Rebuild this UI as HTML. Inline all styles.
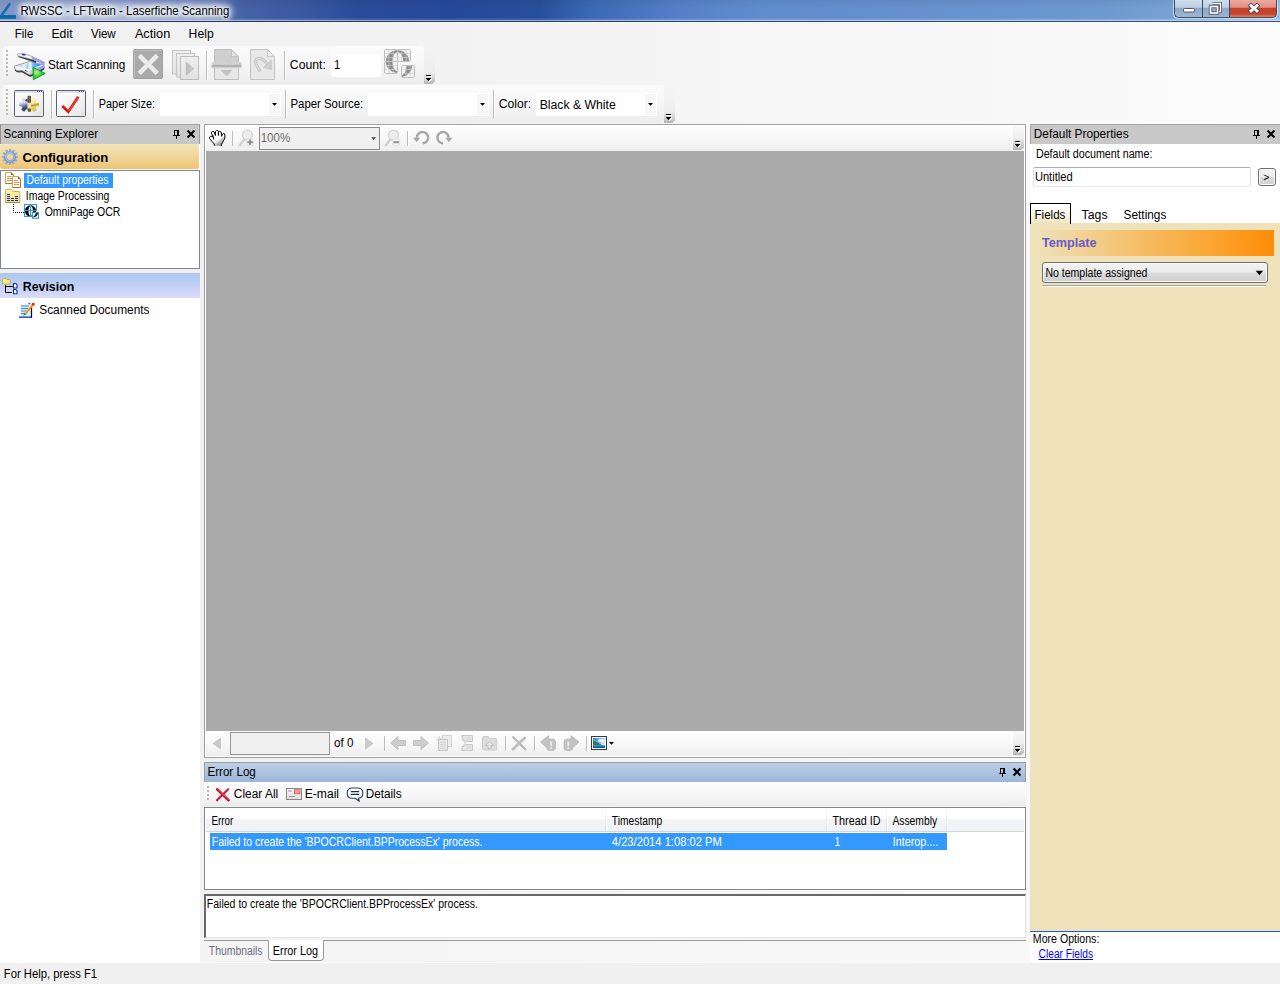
<!DOCTYPE html>
<html><head><meta charset="utf-8"><title>RWSSC - LFTwain - Laserfiche Scanning</title>
<style>
html,body{margin:0;padding:0;}
body{width:1280px;height:984px;position:relative;overflow:hidden;background:#f0f0f0;font-family:'Liberation Sans',sans-serif;}
.t{position:absolute;white-space:pre;transform-origin:0 0;display:block;}
svg{position:absolute;overflow:visible;}
div{box-sizing:border-box;}
</style></head><body>
<div style="position:absolute;left:0px;top:0px;width:1280px;height:21px;background:linear-gradient(90deg,#8397c5 0px,#7a8fc2 100px,#5d77b4 200px,#4561a6 245px,#3b59a1 300px,#2a4b9a 360px,#25489a 450px,#27509c 540px,#3b68b4 590px,#5580c8 680px,#5f8ccd 760px,#6590cd 900px,#6c99d0 1100px,#7aa5d8 1200px,#9cc0e6 1280px);"></div>
<div style="position:absolute;left:0px;top:0px;width:1280px;height:21px;background:linear-gradient(180deg,rgba(0,0,30,.06) 0,rgba(0,0,0,0) 8px,rgba(255,255,255,0) 18px,rgba(255,255,255,.12) 19px,rgba(255,255,255,.12) 20px,rgba(255,255,255,.5) 20px,rgba(255,255,255,.5) 21px);"></div>
<div style="position:absolute;left:22px;top:4px;width:208px;height:15px;background:rgba(255,255,255,.62);filter:blur(5px);border-radius:8px;"></div>
<div style="position:absolute;left:0px;top:21px;width:1280px;height:1px;background:linear-gradient(90deg,#1f2c4a 0,#2a3c66 300px,#34507c 1280px);"></div>
<div style="position:absolute;left:0px;top:22px;width:1280px;height:940px;background:linear-gradient(90deg,#f0f0f0 0,#f2f2f2 400px,#f6f6f6 800px,#f8f8f8 1030px,#fcfcfc 1280px);"></div>
<div style="position:absolute;left:3px;top:46px;width:421px;height:38px;background:linear-gradient(180deg,#fbfbfb 0,#f6f6f6 50%,#ececec 100%);border-radius:3px 3px 3px 3px;"></div>
<div style="position:absolute;left:424px;top:47px;width:11px;height:27px;background:linear-gradient(180deg,rgba(240,240,240,0) 0,rgba(238,238,238,.5) 60%,#ebebeb 100%);border-radius:0 3px 0 0;"></div>
<div style="position:absolute;left:424px;top:73px;width:11px;height:11px;background:linear-gradient(180deg,#ececec 0,#d2d2d2 50%,#b4b4b4 100%);clip-path:polygon(0 0,100% 0,100% 75%,75% 100%,0 100%);"></div>
<div style="position:absolute;left:3px;top:85px;width:661px;height:38px;background:linear-gradient(180deg,#fbfbfb 0,#f6f6f6 50%,#ececec 100%);border-radius:3px;"></div>
<div style="position:absolute;left:664px;top:86px;width:11px;height:27px;background:linear-gradient(180deg,rgba(240,240,240,0) 0,rgba(238,238,238,.5) 60%,#ebebeb 100%);border-radius:0 3px 0 0;"></div>
<div style="position:absolute;left:664px;top:112px;width:11px;height:11px;background:linear-gradient(180deg,#ececec 0,#d2d2d2 50%,#b4b4b4 100%);clip-path:polygon(0 0,100% 0,100% 75%,75% 100%,0 100%);"></div>
<div style="position:absolute;left:6px;top:50px;width:2px;height:2px;background:#b9b9b9;"></div>
<div style="position:absolute;left:6px;top:54px;width:2px;height:2px;background:#b9b9b9;"></div>
<div style="position:absolute;left:6px;top:58px;width:2px;height:2px;background:#b9b9b9;"></div>
<div style="position:absolute;left:6px;top:62px;width:2px;height:2px;background:#b9b9b9;"></div>
<div style="position:absolute;left:6px;top:66px;width:2px;height:2px;background:#b9b9b9;"></div>
<div style="position:absolute;left:6px;top:70px;width:2px;height:2px;background:#b9b9b9;"></div>
<div style="position:absolute;left:6px;top:74px;width:2px;height:2px;background:#b9b9b9;"></div>
<div style="position:absolute;left:6px;top:89px;width:2px;height:2px;background:#b9b9b9;"></div>
<div style="position:absolute;left:6px;top:93px;width:2px;height:2px;background:#b9b9b9;"></div>
<div style="position:absolute;left:6px;top:97px;width:2px;height:2px;background:#b9b9b9;"></div>
<div style="position:absolute;left:6px;top:101px;width:2px;height:2px;background:#b9b9b9;"></div>
<div style="position:absolute;left:6px;top:105px;width:2px;height:2px;background:#b9b9b9;"></div>
<div style="position:absolute;left:6px;top:109px;width:2px;height:2px;background:#b9b9b9;"></div>
<div style="position:absolute;left:6px;top:113px;width:2px;height:2px;background:#b9b9b9;"></div>
<div style="position:absolute;left:206px;top:51px;width:1px;height:29px;background:#bdbdbd;"></div>
<div style="position:absolute;left:207px;top:51px;width:1px;height:29px;background:#fdfdfd;"></div>
<div style="position:absolute;left:284px;top:51px;width:1px;height:29px;background:#bdbdbd;"></div>
<div style="position:absolute;left:285px;top:51px;width:1px;height:29px;background:#fdfdfd;"></div>
<div style="position:absolute;left:51px;top:90px;width:1px;height:29px;background:#bdbdbd;"></div>
<div style="position:absolute;left:52px;top:90px;width:1px;height:29px;background:#fdfdfd;"></div>
<div style="position:absolute;left:93px;top:90px;width:1px;height:29px;background:#bdbdbd;"></div>
<div style="position:absolute;left:94px;top:90px;width:1px;height:29px;background:#fdfdfd;"></div>
<div style="position:absolute;left:285px;top:90px;width:1px;height:29px;background:#bdbdbd;"></div>
<div style="position:absolute;left:286px;top:90px;width:1px;height:29px;background:#fdfdfd;"></div>
<div style="position:absolute;left:493px;top:90px;width:1px;height:29px;background:#bdbdbd;"></div>
<div style="position:absolute;left:494px;top:90px;width:1px;height:29px;background:#fdfdfd;"></div>
<div style="position:absolute;left:331px;top:54px;width:50px;height:23px;background:#fff;"></div>
<div style="position:absolute;left:160px;top:93px;width:121px;height:23px;background:#fff;"></div>
<div style="position:absolute;left:368px;top:93px;width:121px;height:23px;background:#fff;"></div>
<div style="position:absolute;left:536px;top:93px;width:121px;height:23px;background:#fff;"></div>
<div style="position:absolute;left:269px;top:94px;width:11px;height:21px;background:#f7f7f7;"></div>
<div style="position:absolute;left:477px;top:94px;width:11px;height:21px;background:#f7f7f7;"></div>
<div style="position:absolute;left:645px;top:94px;width:11px;height:21px;background:#f7f7f7;"></div>
<div style="position:absolute;left:133px;top:49px;width:30px;height:30px;background:#aaaaaa;border:1px solid #9f9f9f;border-radius:2px;box-shadow:inset 1px 1px 0 #c0c0c0;"></div>
<div style="position:absolute;left:14px;top:90px;width:30px;height:27px;background:linear-gradient(135deg,#fdfdfd 0,#f3f3f3 60%,#e2e2e2 100%);border:1px solid #5d626c;border-radius:1.5px;"></div>
<div style="position:absolute;left:15px;top:91px;width:28px;height:2px;background:#dde2ea;"></div>
<div style="position:absolute;left:15px;top:93px;width:28px;height:1px;background:#fff;"></div>
<div style="position:absolute;left:37px;top:91px;width:1px;height:1px;background:#3a5a9a;"></div>
<div style="position:absolute;left:39px;top:91px;width:1px;height:1px;background:#3a5a9a;"></div>
<div style="position:absolute;left:41px;top:91px;width:1px;height:1px;background:#3a5a9a;"></div>
<div style="position:absolute;left:56px;top:90px;width:30px;height:27px;background:linear-gradient(135deg,#fdfdfd 0,#f3f3f3 60%,#e2e2e2 100%);border:1px solid #5d626c;border-radius:1.5px;"></div>
<div style="position:absolute;left:57px;top:91px;width:28px;height:2px;background:#dde2ea;"></div>
<div style="position:absolute;left:57px;top:93px;width:28px;height:1px;background:#fff;"></div>
<div style="position:absolute;left:79px;top:91px;width:1px;height:1px;background:#3a5a9a;"></div>
<div style="position:absolute;left:81px;top:91px;width:1px;height:1px;background:#3a5a9a;"></div>
<div style="position:absolute;left:83px;top:91px;width:1px;height:1px;background:#3a5a9a;"></div>
<div style="position:absolute;left:0px;top:124px;width:200px;height:839px;background:#fff;"></div>
<div style="position:absolute;left:0px;top:124px;width:200px;height:20px;background:#c8c8c8;border-top:1px solid #a3a3a3;border-left:1px solid #8f8f8f;border-right:1px solid #9c9c9c;"></div>
<div style="position:absolute;left:0px;top:144px;width:199px;height:25px;background:linear-gradient(180deg,#f1e5ba 0,#f0d69a 50%,#efc373 100%);border-radius:2px;"></div>
<div style="position:absolute;left:0px;top:169px;width:200px;height:1px;background:#fbfbfb;"></div>
<div style="position:absolute;left:0px;top:170px;width:200px;height:99px;background:#fff;border:1px solid #828790;"></div>
<div style="position:absolute;left:24px;top:173px;width:89px;height:15px;background:#3399ff;"></div>
<div style="position:absolute;left:0px;top:269px;width:200px;height:4px;background:#f0f0f0;"></div>
<div style="position:absolute;left:0px;top:273px;width:200px;height:25px;background:linear-gradient(180deg,#aec8f0 0,#c0d0f4 50%,#dcdcfb 100%);"></div>
<div style="position:absolute;left:204px;top:124px;width:822px;height:634px;background:#fff;border:1px solid #a0a0a0;"></div>
<div style="position:absolute;left:206px;top:126px;width:818px;height:25px;background:linear-gradient(180deg,#fdfdfd 0,#f8f8f8 50%,#eeeeee 100%);"></div>
<div style="position:absolute;left:206px;top:151px;width:818px;height:580px;background:#ababab;"></div>
<div style="position:absolute;left:206px;top:731px;width:818px;height:25px;background:linear-gradient(180deg,#fdfdfd 0,#f8f8f8 50%,#eeeeee 100%);"></div>
<div style="position:absolute;left:1013px;top:126px;width:11px;height:13px;background:linear-gradient(180deg,#f8f8f8 0,#eeeeee 100%);border-radius:0 3px 0 0;"></div>
<div style="position:absolute;left:1013px;top:139px;width:11px;height:11px;background:linear-gradient(180deg,#e8e8e8 0,#d0d0d0 50%,#b2b2b2 100%);clip-path:polygon(0 0,100% 0,100% 75%,75% 100%,0 100%);"></div>
<div style="position:absolute;left:1013px;top:731px;width:11px;height:13px;background:linear-gradient(180deg,#f8f8f8 0,#eeeeee 100%);"></div>
<div style="position:absolute;left:1013px;top:744px;width:11px;height:11px;background:linear-gradient(180deg,#e8e8e8 0,#d0d0d0 50%,#b2b2b2 100%);clip-path:polygon(0 0,100% 0,100% 75%,75% 100%,0 100%);"></div>
<div style="position:absolute;left:259px;top:127px;width:121px;height:23px;background:#f0f0f0;border:1px solid #8a8a8a;"></div>
<div style="position:absolute;left:230px;top:732px;width:100px;height:23px;background:#f0f0f0;border:1px solid #969696;"></div>
<div style="position:absolute;left:232px;top:131px;width:1px;height:15px;background:#bdbdbd;"></div>
<div style="position:absolute;left:233px;top:131px;width:1px;height:15px;background:#fdfdfd;"></div>
<div style="position:absolute;left:407px;top:131px;width:1px;height:15px;background:#bdbdbd;"></div>
<div style="position:absolute;left:408px;top:131px;width:1px;height:15px;background:#fdfdfd;"></div>
<div style="position:absolute;left:384px;top:736px;width:1px;height:15px;background:#bdbdbd;"></div>
<div style="position:absolute;left:385px;top:736px;width:1px;height:15px;background:#fdfdfd;"></div>
<div style="position:absolute;left:505px;top:736px;width:1px;height:15px;background:#bdbdbd;"></div>
<div style="position:absolute;left:506px;top:736px;width:1px;height:15px;background:#fdfdfd;"></div>
<div style="position:absolute;left:534px;top:736px;width:1px;height:15px;background:#bdbdbd;"></div>
<div style="position:absolute;left:535px;top:736px;width:1px;height:15px;background:#fdfdfd;"></div>
<div style="position:absolute;left:586px;top:736px;width:1px;height:15px;background:#bdbdbd;"></div>
<div style="position:absolute;left:587px;top:736px;width:1px;height:15px;background:#fdfdfd;"></div>
<div style="position:absolute;left:204px;top:762px;width:822px;height:20px;background:linear-gradient(180deg,#bccfe7 0,#adc3e0 50%,#9bb6d8 100%);border-top:1px solid #9c9c9c;border-left:1px solid #9c9c9c;border-right:1px solid #9c9c9c;"></div>
<div style="position:absolute;left:204px;top:782px;width:822px;height:24px;background:linear-gradient(180deg,#fdfdfd 0,#f8f8f8 50%,#ececec 100%);"></div>
<div style="position:absolute;left:207px;top:786px;width:2px;height:2px;background:#b9b9b9;"></div>
<div style="position:absolute;left:207px;top:790px;width:2px;height:2px;background:#b9b9b9;"></div>
<div style="position:absolute;left:207px;top:794px;width:2px;height:2px;background:#b9b9b9;"></div>
<div style="position:absolute;left:207px;top:798px;width:2px;height:2px;background:#b9b9b9;"></div>
<div style="position:absolute;left:204px;top:807px;width:822px;height:83px;background:#fff;border:1px solid #828790;"></div>
<div style="position:absolute;left:206px;top:809px;width:818px;height:23px;background:linear-gradient(180deg,#fff 0,#fff 45%,#f3f4f8 46%,#f1f2f6 100%);border-bottom:1px solid #d5d5d5;"></div>
<div style="position:absolute;left:605px;top:809px;width:1px;height:22px;background:linear-gradient(180deg,#fbfbfb,#d8d9de);"></div>
<div style="position:absolute;left:606px;top:809px;width:1px;height:22px;background:#fff;"></div>
<div style="position:absolute;left:826px;top:809px;width:1px;height:22px;background:linear-gradient(180deg,#fbfbfb,#d8d9de);"></div>
<div style="position:absolute;left:827px;top:809px;width:1px;height:22px;background:#fff;"></div>
<div style="position:absolute;left:886px;top:809px;width:1px;height:22px;background:linear-gradient(180deg,#fbfbfb,#d8d9de);"></div>
<div style="position:absolute;left:887px;top:809px;width:1px;height:22px;background:#fff;"></div>
<div style="position:absolute;left:946px;top:809px;width:1px;height:22px;background:linear-gradient(180deg,#fbfbfb,#d8d9de);"></div>
<div style="position:absolute;left:947px;top:809px;width:1px;height:22px;background:#fff;"></div>
<div style="position:absolute;left:210px;top:833px;width:737px;height:17px;background:#3399ff;"></div>
<div style="position:absolute;left:204px;top:894px;width:822px;height:44px;background:#fff;border-top:2px solid #696969;border-left:2px solid #696969;border-right:1px solid #e3e3e3;border-bottom:1px solid #e3e3e3;"></div>
<div style="position:absolute;left:200px;top:938px;width:830px;height:24px;background:linear-gradient(90deg,#f4f4f4,#f8f8f8);"></div>
<div style="position:absolute;left:204px;top:940px;width:822px;height:1px;background:#9a9a9a;"></div>
<div style="position:absolute;left:268px;top:940px;width:56px;height:21px;background:#fff;border:1px solid #9a9a9a;border-top:none;border-radius:0 0 4px 4px;"></div>
<div style="position:absolute;left:1030px;top:124px;width:250px;height:838px;background:#fff;"></div>
<div style="position:absolute;left:1030px;top:124px;width:250px;height:20px;background:#c8c8c8;border-top:1px solid #a3a3a3;border-left:1px solid #a3a3a3;"></div>
<div style="position:absolute;left:1033px;top:167px;width:218px;height:20px;background:#fff;border:1px solid #dbdfe6;border-top-color:#abadb3;border-bottom-color:#e3e9ef;border-radius:2px;"></div>
<div style="position:absolute;left:1258px;top:168px;width:18px;height:18px;background:linear-gradient(180deg,#f4f4f4 0,#ececec 48%,#dddddd 52%,#cfcfcf 100%);border:1px solid #707070;border-radius:3px;box-shadow:inset 0 0 0 1px #fcfcfc;"></div>
<div style="position:absolute;left:1030px;top:223px;width:250px;height:708px;background:#efe1b9;"></div>
<div style="position:absolute;left:1030px;top:203px;width:41px;height:21px;background:linear-gradient(180deg,#fff 0,#fdfaf0 40%,#efe1b9 100%);border:1px solid #000;border-bottom:none;"></div>
<div style="position:absolute;left:1037px;top:230px;width:237px;height:26px;background:linear-gradient(90deg,#efe1b9 0,#f2d193 20%,#f6b85a 50%,#fba430 75%,#ff8c06 100%);"></div>
<div style="position:absolute;left:1042px;top:262px;width:226px;height:21px;background:linear-gradient(180deg,#f3f3f3 0,#ebebeb 48%,#dcdcdc 52%,#cecece 100%);border:1px solid #707070;border-radius:3px;box-shadow:inset 0 0 0 1px #fafafa;"></div>
<div style="position:absolute;left:1042px;top:285px;width:224px;height:1px;background:#a9a9a9;"></div>
<div style="position:absolute;left:1042px;top:286px;width:224px;height:1px;background:#fff;"></div>
<div style="position:absolute;left:1030px;top:931px;width:250px;height:1px;background:#1c5fc4;"></div>
<div style="position:absolute;left:0px;top:962px;width:1280px;height:1px;background:#fff;"></div>
<div style="position:absolute;left:0px;top:963px;width:1280px;height:21px;background:#f0f0f0;"></div>
<svg style="left:0px;top:2px" width="18" height="18" viewBox="0 2 18 18"><path d="M0,15h16v3.800h-16z" fill="#0b69ae"/><path d="M1.600,15.200L10.100,3.400" stroke="#0f6db2" stroke-width="2.500" fill="none"/></svg>
<svg style="left:1172px;top:0px" width="108" height="20" viewBox="1172 0 108 20">
<defs>
<linearGradient id="wb" x1="0" y1="0" x2="0" y2="1"><stop offset="0" stop-color="#d3e0f0"/><stop offset=".45" stop-color="#bccde3"/><stop offset=".5" stop-color="#8ea8ca"/><stop offset="1" stop-color="#9db7d8"/></linearGradient>
<linearGradient id="wr" x1="0" y1="0" x2="0" y2="1"><stop offset="0" stop-color="#eeb0a4"/><stop offset=".45" stop-color="#e08d80"/><stop offset=".5" stop-color="#c9432b"/><stop offset=".8" stop-color="#c8432c"/><stop offset="1" stop-color="#e08a6c"/></linearGradient>
</defs>
<path d="M1174.5,-1v14.5a4,4 0 0 0 4,4h94a4,4 0 0 0 4,-4v-14.5z" fill="none" stroke="rgba(255,255,255,.55)" stroke-width="3"/>
<path d="M1174.5,-1v14.5a4,4 0 0 0 4,4h23.5v-18.5z" fill="url(#wb)"/>
<path d="M1202,-1v18.5h27v-18.5z" fill="url(#wb)"/>
<path d="M1229,-1v18.5h43.500a4,4 0 0 0 4,-4v-14.5z" fill="url(#wr)"/>
<path d="M1174.500,-1v14.500a4,4 0 0 0 4,4h94a4,4 0 0 0 4,-4v-14.500" fill="none" stroke="#3c4a5f" stroke-width="1"/>
<path d="M1202.500,0v17M1229.500,0v17" stroke="#3c4a5f" stroke-width="1"/>
<rect x="1183.500" y="8.500" width="11" height="3.500" rx=".8" fill="#fff" stroke="#555c68" stroke-width="1"/>
<path d="M1212.500,3.500h8v8h-2" fill="none" stroke="#555c68" stroke-width="3"/><path d="M1212.500,3.500h8v8h-2" fill="none" stroke="#fff" stroke-width="1.300"/>
<rect x="1210.500" y="6.500" width="7" height="6.500" fill="none" stroke="#555c68" stroke-width="3.400"/><rect x="1210.500" y="6.500" width="7" height="6.500" fill="none" stroke="#fff" stroke-width="1.600"/>
<path d="M1251,5.700L1257,11M1257,5.700L1251,11" stroke="#464a58" stroke-width="4.700" stroke-linecap="square"/><path d="M1251,5.700L1257,11M1257,5.700L1251,11" stroke="#fff" stroke-width="2.900" stroke-linecap="square"/>
</svg>
<svg style="left:13px;top:52px" width="34" height="30" viewBox="13 52 34 30">
<defs>
<linearGradient id="sg" x1="0" y1="0" x2="1" y2="0"><stop offset="0" stop-color="#7fc0f5"/><stop offset=".25" stop-color="#eef7fe"/><stop offset=".38" stop-color="#9ccff7"/><stop offset=".5" stop-color="#ffffff"/><stop offset=".62" stop-color="#6fb6f3"/><stop offset="1" stop-color="#1e8ceb"/></linearGradient>
<radialGradient id="gp" cx=".3" cy=".4" r=".8"><stop offset="0" stop-color="#b4f2a8"/><stop offset=".45" stop-color="#3fcf3a"/><stop offset="1" stop-color="#06a012"/></radialGradient>
</defs>
<path d="M14.800,70.500q2,2.300 4.500,2q2.500,-.8 4,.5l5.500,3.300q1.500,.8 3.500,-.3l12,-6.500l.2,-2l-29,-1z" fill="#1a1a1a" opacity=".85"/>
<path d="M14.300,66.300L29,61.600L43.500,64.800L44.300,67.500L31.500,74.300q-1.700,.8 -3.200,0l-5.300,-3.300q-1.500,-.9 -3.500,-.2q-2.500,.6 -4.500,-1.500z" fill="#f1f1f4" stroke="#85858c" stroke-width=".8"/>
<path d="M29.800,71.500L44.300,64.800L44.300,67.500L31.500,74.300L29.800,74.300z" fill="#9d9af0"/>
<path d="M29.800,70.800L38,67L38,70.500L31.500,74.300L29.800,74.500z" fill="#c9c9d0"/>
<path d="M18.800,65.800L30.500,62.300L41.800,64.700L30,69.800z" fill="url(#sg)"/>
<path d="M25,70.300l2.500,1.300" stroke="#555" stroke-width=".9"/>
<path d="M18,57L32,61.500L36,63L36.500,61.500L33,59.500L19,55.800z" fill="#1c1c1c" opacity=".9"/>
<path d="M17.200,55.200q-.3,-1 1.200,-1.300l4,-.4q1.200,0 2.500,.4l7.500,2.700l-.2,2.900l-13.700,-3.500q-1,-.3 -1.300,-.8z" fill="#f4f4f7" stroke="#8e8e96" stroke-width=".7"/>
<path d="M32.300,56.500L44.600,62.300L44.600,65.300L32.200,59.500z" fill="#a09df2"/>
<path d="M32.300,56.500L44.600,62.300" stroke="#8684d4" stroke-width=".7" stroke-dasharray="1.200 .8"/>
<ellipse cx="23.700" cy="54.700" rx="2" ry=".85" fill="#3a38b8" transform="rotate(8 23.700 54.700)"/>
<path d="M33,67.300L45.200,73.400L33.300,79.700z" fill="url(#gp)" stroke="#10a51c" stroke-width="1" stroke-linejoin="round"/>
</svg>
<svg style="left:133px;top:49px" width="30" height="30" viewBox="133 49 30 30"><path d="M139.300,55.300L157.200,73.300M157.200,55.300L139.300,73.300" stroke="#ebebeb" stroke-width="4.600" fill="none"/></svg>
<svg style="left:171px;top:49px" width="30" height="32" viewBox="171 49 30 32">
<defs><linearGradient id="pg" x1="0" y1="0" x2="0" y2="1"><stop offset="0" stop-color="#efefef"/><stop offset="1" stop-color="#e2e2e2"/></linearGradient></defs>
<rect x="172.500" y="50.500" width="18" height="23.500" fill="url(#pg)" stroke="#c4c4c4"/>
<rect x="176.500" y="53.500" width="18" height="23.500" fill="url(#pg)" stroke="#c4c4c4"/>
<rect x="180.500" y="56.500" width="18" height="23" fill="url(#pg)" stroke="#bdbdbd"/>
<defs><linearGradient id="pt" x1="0" y1="0" x2="1" y2="0"><stop offset="0" stop-color="#b9b9b9"/><stop offset="1" stop-color="#d4d4d4"/></linearGradient></defs><path d="M186.300,62.300L193.800,68.800L186.300,75.200z" fill="url(#pt)" stroke="#bababa" stroke-width=".7"/>
</svg>
<svg style="left:210px;top:48px" width="33" height="33" viewBox="210 48 33 33">
<path d="M214.500,49.500h17l7,7v23h-24z" fill="#e7e7e7" stroke="#bdbdbd"/>
<path d="M215,50h16.300l6.700,6.700v6.300h-23z" fill="#cfcfcf"/>
<path d="M231.500,49.800v6.800h6.800z" fill="#e2e2e2" stroke="#bdbdbd" stroke-width=".8"/>
<rect x="211.500" y="62.300" width="30" height="2.600" fill="#d0d0d0"/><rect x="211.500" y="64.800" width="30" height="2.800" fill="#b1b1b1"/><rect x="211.500" y="67.300" width="30" height="1" fill="#d4d4d4"/>
<path d="M221.300,70.300h10.600l-5.300,5.700z" fill="#c4c4c4" stroke="#b6b6b6" stroke-width=".6"/>
</svg>
<svg style="left:249px;top:48px" width="28" height="33" viewBox="249 48 28 33">
<path d="M250.500,49.500h17l7,7v23h-24z" fill="#e8e8e8" stroke="#c2c2c2"/>
<path d="M267.500,49.800v6.800h6.800z" fill="#f1f1f1" stroke="#c2c2c2" stroke-width=".8"/>
<path d="M259.500,70.500C254,62 255,58.500 259.500,58.500C263,58.500 266,62 268.500,66" fill="none" stroke="#c6c6c6" stroke-width="3.200" stroke-linecap="round"/>
<path d="M259.500,70.500C254,62 255,58.500 259.500,58.500C263,58.500 266,62 268.500,66" fill="none" stroke="#dedede" stroke-width="1.200" stroke-linecap="round"/>
<path d="M263.300,67.500L271.300,60L271.700,69.500z" fill="#d0d0d0" stroke="#c2c2c2" stroke-width=".6"/>
</svg>
<svg style="left:383px;top:48px" width="33" height="31" viewBox="383 48 33 31">
<defs>
<clipPath id="c1"><rect x="385" y="50" width="12" height="11"/><rect x="398" y="50" width="12" height="11"/><rect x="385" y="62" width="12" height="11"/></clipPath>
<clipPath id="c2"><rect x="402" y="66" width="12" height="11"/></clipPath>
</defs>
<rect x="384.5" y="49.5" width="13" height="12" rx="1.200" fill="#f1f1f1" stroke="#bfbfbf" stroke-width="1"/><rect x="397.5" y="49.5" width="13" height="12" rx="1.200" fill="#f1f1f1" stroke="#bfbfbf" stroke-width="1"/><rect x="384.5" y="61.5" width="13" height="12" rx="1.200" fill="#f1f1f1" stroke="#bfbfbf" stroke-width="1"/><rect x="401.5" y="65.5" width="13" height="12" rx="1.200" fill="#f1f1f1" stroke="#bfbfbf" stroke-width="1"/>
<g clip-path="url(#c1)"><path fill-rule="evenodd" d="M397.500,50.300a11.600,11.300 0 1 0 0,22.600a11.600,11.300 0 1 0 0,-22.600z M397.800,51.900a5.400,9.700 0 1 1 0,19.400a5.400,9.700 0 1 1 0,-19.400z" fill="#8d8d8d"/></g>
<g clip-path="url(#c2)"><g transform="translate(3.200,4)"><path fill-rule="evenodd" d="M397.500,50.300a11.600,11.300 0 1 0 0,22.600a11.600,11.300 0 1 0 0,-22.600z M397.800,51.900a5.400,9.700 0 1 1 0,19.400a5.400,9.700 0 1 1 0,-19.400z" fill="#8d8d8d"/></g></g>
<path d="M388.83,50.0v11M385.0,53.5h12" stroke="#d2d2d2" stroke-opacity=".7" stroke-width=".9"/><path d="M393.17,50.0v11M385.0,57.5h12" stroke="#d2d2d2" stroke-opacity=".7" stroke-width=".9"/><path d="M401.83,50.0v11M398.0,53.5h12" stroke="#d2d2d2" stroke-opacity=".7" stroke-width=".9"/><path d="M406.17,50.0v11M398.0,57.5h12" stroke="#d2d2d2" stroke-opacity=".7" stroke-width=".9"/><path d="M388.83,62.0v11M385.0,65.5h12" stroke="#d2d2d2" stroke-opacity=".7" stroke-width=".9"/><path d="M393.17,62.0v11M385.0,69.5h12" stroke="#d2d2d2" stroke-opacity=".7" stroke-width=".9"/><path d="M405.83,66.0v11M402.0,69.5h12" stroke="#d2d2d2" stroke-opacity=".7" stroke-width=".9"/><path d="M410.17,66.0v11M402.0,73.5h12" stroke="#d2d2d2" stroke-opacity=".7" stroke-width=".9"/>
</svg>
<svg style="left:426px;top:75px" width="7" height="8" viewBox="426 75 7 8"><path d="M427,76h5v1h-5z M427,79h5v1h-5z M428,80h3v1h-3z M429,81h1v1h-1z" fill="#fff" shape-rendering="crispEdges"/><path d="M426,75h5v1h-5z M426,78h5v1h-5z M427,79h3v1h-3z M428,80h1v1h-1z" fill="#000" shape-rendering="crispEdges"/></svg>
<svg style="left:666px;top:114px" width="7" height="8" viewBox="666 114 7 8"><path d="M667,115h5v1h-5z M667,118h5v1h-5z M668,119h3v1h-3z M669,120h1v1h-1z" fill="#fff" shape-rendering="crispEdges"/><path d="M666,114h5v1h-5z M666,117h5v1h-5z M667,118h3v1h-3z M668,119h1v1h-1z" fill="#000" shape-rendering="crispEdges"/></svg>
<svg style="left:1015px;top:141px" width="7" height="8" viewBox="1015 141 7 8"><path d="M1016,142h5v1h-5z M1016,145h5v1h-5z M1017,146h3v1h-3z M1018,147h1v1h-1z" fill="#fff" shape-rendering="crispEdges"/><path d="M1015,141h5v1h-5z M1015,144h5v1h-5z M1016,145h3v1h-3z M1017,146h1v1h-1z" fill="#000" shape-rendering="crispEdges"/></svg>
<svg style="left:1015px;top:746px" width="7" height="8" viewBox="1015 746 7 8"><path d="M1016,747h5v1h-5z M1016,750h5v1h-5z M1017,751h3v1h-3z M1018,752h1v1h-1z" fill="#fff" shape-rendering="crispEdges"/><path d="M1015,746h5v1h-5z M1015,749h5v1h-5z M1016,750h3v1h-3z M1017,751h1v1h-1z" fill="#000" shape-rendering="crispEdges"/></svg>
<svg style="left:17px;top:94px" width="24" height="19" viewBox="17 94 24 19">
<defs>
<linearGradient id="gb" gradientUnits="userSpaceOnUse" x1="21" y1="97" x2="25" y2="111.500"><stop offset="0" stop-color="#eef0f7"/><stop offset=".42" stop-color="#d3d8e8"/><stop offset=".58" stop-color="#7f8ab2"/><stop offset=".78" stop-color="#3a4678"/><stop offset="1" stop-color="#434e84"/></linearGradient>
<linearGradient id="gy" gradientUnits="userSpaceOnUse" x1="33" y1="97" x2="36" y2="111.500"><stop offset="0" stop-color="#fdf7d6"/><stop offset=".42" stop-color="#f5e59c"/><stop offset=".55" stop-color="#bb9c1c"/><stop offset=".68" stop-color="#e9d476"/><stop offset="1" stop-color="#d0b23a"/></linearGradient>
<linearGradient id="gbar" x1="0" y1="0" x2="1" y2="0"><stop offset="0" stop-color="#2a241a"/><stop offset=".5" stop-color="#857560"/><stop offset="1" stop-color="#2e271c"/></linearGradient>
<clipPath id="cgb"><rect x="17" y="94" width="10.800" height="20"/></clipPath><clipPath id="cgy"><rect x="30.500" y="94" width="11" height="20"/></clipPath>
</defs>
<path clip-path="url(#cgb)" d="M21.5,104.3a5.0,5.0 0 1 0 10.0,0a5.0,5.0 0 1 0 -10.0,0zM26.58,99.64L24.22,96.95L21.28,98.65L22.42,102.04zM22.50,101.90L19.00,102.60L19.00,106.00L22.50,106.70zM22.42,106.56L21.28,109.95L24.22,111.65L26.58,108.96z" fill="url(#gb)"/>
<path clip-path="url(#cgy)" d="M26.5,104.6a5.0,5.0 0 1 0 10.0,0a5.0,5.0 0 1 0 -10.0,0zM35.58,102.34L36.72,98.95L33.78,97.25L31.42,99.94zM35.50,107.00L39.00,106.30L39.00,102.90L35.50,102.20zM31.42,109.26L33.78,111.95L36.72,110.25L35.58,106.86z" fill="url(#gy)"/>
<path d="M24.800,100.300l2.600,-1.800v3.600z" fill="#2b2b33"/>
<rect x="27.700" y="95.800" width="3.200" height="7.300" rx=".8" fill="url(#gbar)"/>
<rect x="27.600" y="102.900" width="3.400" height="5.800" fill="#f0e3ba"/>
<rect x="27.600" y="108.500" width="3.400" height="3.200" rx=".6" fill="#6a5a12"/>
</svg>
<svg style="left:60px;top:94px" width="22" height="20" viewBox="60 94 22 20"><path d="M62.300,106L68.300,111.700L78.300,96.700" fill="none" stroke="#e01010" stroke-width="2.700" stroke-linejoin="miter"/><path d="M68.600,111.300L78.600,96.500" fill="none" stroke="#f56a6a" stroke-width=".8"/></svg>
<svg style="left:272px;top:103px" width="5" height="3" viewBox="272 103 5 3"><path d="M272,103h5l-2.5,2.8z" fill="#000"/></svg>
<svg style="left:480px;top:103px" width="5" height="3" viewBox="480 103 5 3"><path d="M480,103h5l-2.5,2.8z" fill="#000"/></svg>
<svg style="left:648px;top:103px" width="5" height="3" viewBox="648 103 5 3"><path d="M648,103h5l-2.5,2.8z" fill="#000"/></svg>
<svg style="left:173px;top:130px" width="8" height="9" viewBox="173 130 8 9"><path d="M174,130h5v1h-5z M174,130h1v5h-1z M177,130h2v5h-2z M173,135h7v1h-7z M176,136h1v3h-1z" fill="#000" shape-rendering="crispEdges"/></svg>
<svg style="left:187px;top:130px" width="8" height="8" viewBox="187 130 8 8"><path d="M188.3,131.3L193.7,136.7M193.7,131.3L188.3,136.7" stroke="#000" stroke-width="2.100" stroke-linecap="square" fill="none"/></svg>
<svg style="left:1253px;top:130px" width="8" height="9" viewBox="1253 130 8 9"><path d="M1254,130h5v1h-5z M1254,130h1v5h-1z M1257,130h2v5h-2z M1253,135h7v1h-7z M1256,136h1v3h-1z" fill="#000" shape-rendering="crispEdges"/></svg>
<svg style="left:1267px;top:130px" width="8" height="8" viewBox="1267 130 8 8"><path d="M1268.3,131.3L1273.7,136.7M1273.7,131.3L1268.3,136.7" stroke="#000" stroke-width="2.100" stroke-linecap="square" fill="none"/></svg>
<svg style="left:999px;top:768px" width="8" height="9" viewBox="999 768 8 9"><path d="M1000,768h5v1h-5z M1000,768h1v5h-1z M1003,768h2v5h-2z M999,773h7v1h-7z M1002,774h1v3h-1z" fill="#000" shape-rendering="crispEdges"/></svg>
<svg style="left:1013px;top:768px" width="8" height="8" viewBox="1013 768 8 8"><path d="M1014.3,769.3L1019.7,774.7M1019.7,769.3L1014.3,774.7" stroke="#000" stroke-width="2.100" stroke-linecap="square" fill="none"/></svg>
<svg style="left:1px;top:148px" width="18" height="18" viewBox="1 148 18 18"><defs><radialGradient id="cg" cx=".4" cy=".35" r=".7"><stop offset="0" stop-color="#a9c2de"/><stop offset="1" stop-color="#6a8fbd"/></radialGradient></defs>
<g transform="translate(10,157)"><g fill="url(#cg)"><path d="M-1,-8h2l.3,3h-2.600z" transform="rotate(0)"/><path d="M-1,-8h2l.3,3h-2.600z" transform="rotate(30)"/><path d="M-1,-8h2l.3,3h-2.600z" transform="rotate(60)"/><path d="M-1,-8h2l.3,3h-2.600z" transform="rotate(90)"/><path d="M-1,-8h2l.3,3h-2.600z" transform="rotate(120)"/><path d="M-1,-8h2l.3,3h-2.600z" transform="rotate(150)"/><path d="M-1,-8h2l.3,3h-2.600z" transform="rotate(180)"/><path d="M-1,-8h2l.3,3h-2.600z" transform="rotate(210)"/><path d="M-1,-8h2l.3,3h-2.600z" transform="rotate(240)"/><path d="M-1,-8h2l.3,3h-2.600z" transform="rotate(270)"/><path d="M-1,-8h2l.3,3h-2.600z" transform="rotate(300)"/><path d="M-1,-8h2l.3,3h-2.600z" transform="rotate(330)"/><path fill-rule="evenodd" d="M0,-5.700a5.700,5.700 0 1 0 0,11.400a5.700,5.700 0 1 0 0,-11.400z M0,-3a3,3 0 1 1 0,6a3,3 0 1 1 0,-6z"/></g><circle r="4.300" fill="none" stroke="#b5cbe4" stroke-width=".9" opacity=".8"/></g></svg>
<svg style="left:5px;top:171px" width="17" height="18" viewBox="5 171 17 18">
<path d="M5.500,172.500h5.500l2.500,2.500v8.500h-8z" fill="#fffefa" stroke="#d4a24a" stroke-width="1"/><path d="M5.500,183.500h8v-8.300" fill="none" stroke="#b37c1c" stroke-width="1"/><path d="M11,172.300v2.700h2.700z" fill="#8a5a10"/>
<path d="M7,176.500h4.500M7,178.500h5M7,180.500h5" stroke="#ee8d50" stroke-width="1"/>
<path d="M12.500,176.500h5.500l2.500,2.500v8.500h-8z" fill="#fffefa" stroke="#d4a24a" stroke-width="1"/><path d="M12.500,187.500h8v-8.300" fill="none" stroke="#b37c1c" stroke-width="1"/><path d="M18,176.300v2.700h2.700z" fill="#8a5a10"/>
<path d="M14,180.500h4.500M14,182.500h5M14,184.500h5" stroke="#ee8d50" stroke-width="1"/>
</svg>
<svg style="left:4px;top:188px" width="17" height="16" viewBox="4 188 17 16">
<defs><linearGradient id="fo" x1="0" y1="0" x2="0" y2="1"><stop offset="0" stop-color="#fdf3b8"/><stop offset="1" stop-color="#f3dd7e"/></linearGradient></defs>
<path d="M5.500,190.300q0,-1 1,-1h4.300q.8,0 1.300,.8l.9,1.400h5.800q1,0 1,1v10h-14.300z" fill="url(#fo)" stroke="#d0ac50" stroke-width="1"/>
<path d="M5.500,202.500h14.300" stroke="#b48a2e" stroke-width="1"/>
<path d="M7,194.500h3M7,196.500h3M7,198.500h3M7,200.500h3M11,198.500h3M11,200.500h3M15,196.500h3M15,198.500h3M15,200.500h3" stroke="#1030c0" stroke-width="1.100"/>
</svg>
<svg style="left:12px;top:203px" width="28" height="17" viewBox="12 203 28 17">
<path d="M13.500,204v8.500h11" fill="none" stroke="#000" stroke-width="1" stroke-dasharray="1 1"/>
<path fill-rule="evenodd" d="M30.500,205.200a5.600,5.800 0 1 0 0,11.600a5.600,5.800 0 1 0 0,-11.600z M30.700,206.300a2.200,4.700 0 1 1 0,9.400a2.200,4.700 0 1 1 0,-9.400z" fill="#000"/>
<path d="M24.500,204.500h6v6h-6zM30.500,204.500h6v6h-6zM24.500,210.500h6v6h-6z" fill="none" stroke="#2a9bd6" stroke-width="1.100"/>
<rect x="32.500" y="212.500" width="6" height="5.700" fill="#fff" stroke="#2a9bd6" stroke-width="1.100"/>
<path d="M33.500,217.500q4,-1 4.500,-4.500l-2,0q-.5,2.500 -2.500,3.500z" fill="#000"/>
</svg>
<svg style="left:1px;top:277px" width="17" height="18" viewBox="1 277 17 18">
<path d="M2.500,279.500q0,-1 1,-1h2.500l1,1h2.500q.8,0 .8,.8v3.700h-7.800z" fill="#f7e694" stroke="#cfa93c" stroke-width="1"/>
<path d="M5.500,285v7.500h6.500M5.500,286.500h7.500" fill="none" stroke="#000" stroke-width="1"/>
<path d="M13.500,283.500h2.300l1.200,1.200v3.300h-3.500zM13.500,289.500h2.300l1.200,1.200v3h-3.500z" fill="#fff" stroke="#12309e" stroke-width="1.100"/>
</svg>
<svg style="left:18px;top:301px" width="18" height="18" viewBox="18 301 18 18">
<rect x="20.500" y="304.500" width="11" height="12.500" fill="#ddeeff"/>
<path d="M21,306h8M21,308.500h7M21,311h6M21,313.500h5" stroke="#3a86e0" stroke-width="1.100"/>
<path d="M19,317.200h12.500" stroke="#1648b8" stroke-width="1.400"/>
<path d="M31.500,305.500v12.300" stroke="#000" stroke-width="1.200"/><path d="M31.500,305.500l2.500,-2" stroke="#000" stroke-width="1.200"/>
<path d="M33.300,304.300L25,314" stroke="#f0901c" stroke-width="2.300"/><path d="M32.800,303.800L24.700,313.300" stroke="#fbd28a" stroke-width=".7"/>
<circle cx="33.300" cy="304.200" r="1.400" fill="#e8281c"/>
<path d="M24.300,313.300l1.700,1.500l-2.800,1z" fill="#2a5ad0"/>
<path d="M28.300,302.300l2.700,1.500l-2.200,.8z" fill="#2a5ad0"/>
</svg>
<svg style="left:208px;top:129px" width="18" height="18" viewBox="208 129 18 18">
<defs><linearGradient id="hd" x1=".2" y1=".2" x2=".75" y2="1"><stop offset="0" stop-color="#fff"/><stop offset=".5" stop-color="#fff"/><stop offset="1" stop-color="#777"/></linearGradient></defs>
<path d="M214.400,145.800L214.200,144L209.500,138.500L209.500,137.200L210.700,136.300L212.300,136.300L213.400,137.600L212.600,135.800L211.500,133.500L211.600,132.200L212.700,131.400L213.900,131.700L214.600,133L215.400,135.500L215.400,131.500L216.500,130.500L217.700,130.500L218.400,131.600L218.400,135.500L218.500,131.800L219.600,131.400L220.800,131.700L221.400,133L221.400,136.300L222.800,134L223.600,133.200L224.500,133.700L224.900,135L224.900,138L223.600,140.500L222.600,142.500L221.600,144.200L221.500,145.800" fill="url(#hd)" stroke="#000" stroke-width="1" stroke-linejoin="round"/>
<path d="M213.400,137.600L213.800,139.300M212.600,135.800L213.600,136.300" stroke="#000" stroke-width="1.100" fill="none"/>
</svg>
<svg style="left:239px;top:129px" width="16" height="18" viewBox="239 129 16 18"><path d="M239.8,145.2L244.3,139.2" stroke="#cfcfcf" stroke-width="2.300" stroke-linecap="round"/><circle cx="247.5" cy="135.200" r="5" fill="#ededed" stroke="#d3d3d3" stroke-width="1.300"/><rect x="246.6" y="138.800" width="7" height="6.800" rx="1.600" fill="#f4f4f4" stroke="#dadada" stroke-width=".8"/><path d="M247.4,142.2h5.400" stroke="#8f8f8f" stroke-width="2"/><path d="M250.1,139.5v5.400" stroke="#8f8f8f" stroke-width="2"/></svg>
<svg style="left:385px;top:129px" width="16" height="18" viewBox="385 129 16 18"><path d="M385.8,145.2L390.3,139.2" stroke="#cfcfcf" stroke-width="2.300" stroke-linecap="round"/><circle cx="393.5" cy="135.200" r="5" fill="#ededed" stroke="#d3d3d3" stroke-width="1.300"/><rect x="392.6" y="138.800" width="7" height="6.800" rx="1.600" fill="#f4f4f4" stroke="#dadada" stroke-width=".8"/><path d="M393.4,142.2h5.400" stroke="#8f8f8f" stroke-width="2"/></svg>
<svg style="left:371px;top:137px" width="6" height="4" viewBox="371 137 6 4"><path d="M371.200,137.200h5l-2.500,2.900z" fill="#444"/></svg>
<svg style="left:412px;top:130px" width="18" height="17" viewBox="412 130 18 17"><path d="M422.500,143.300A5.600,5.600 0 1 0 416.900,137.700" fill="none" stroke="#a8a8a8" stroke-width="2.500"/><path d="M413,137.800h7.200l-3.600,4.400z" fill="#a8a8a8"/></svg>
<svg style="left:435px;top:130px" width="18" height="17" viewBox="435 130 18 17"><path d="M443,143.300A5.600,5.600 0 1 1 448.600,137.700" fill="none" stroke="#a8a8a8" stroke-width="2.500"/><path d="M452.500,137.800h-7.200l3.600,4.400z" fill="#a8a8a8"/></svg>
<svg style="left:212px;top:737px" width="10" height="13" viewBox="212 737 10 13"><path d="M220.500,738v11l-7.500,-5.500z" fill="#c9c9c9" stroke="#bdbdbd" stroke-width=".6"/></svg>
<svg style="left:365px;top:737px" width="10" height="13" viewBox="365 737 10 13"><path d="M365.500,738v11l7.500,-5.500z" fill="#c9c9c9" stroke="#bdbdbd" stroke-width=".6"/></svg>
<svg style="left:389px;top:735px" width="18" height="16" viewBox="389 735 18 16"><path d="M390.500,743L398,736.500V740.500H405.500V745.500H398V749.500z" fill="#cdcdcd" stroke="#b9b9b9" stroke-width=".8" stroke-linejoin="round"/></svg>
<svg style="left:412px;top:735px" width="18" height="16" viewBox="412 735 18 16"><path d="M428.500,743L421,736.500V740.500H413.500V745.500H421V749.500z" fill="#cdcdcd" stroke="#b9b9b9" stroke-width=".8" stroke-linejoin="round"/></svg>
<svg style="left:435px;top:735px" width="18" height="16" viewBox="435 735 18 16"><rect x="442.500" y="735.500" width="9" height="11" fill="#ededed" stroke="#d2d2d2"/><rect x="438.500" y="739.500" width="9" height="11" fill="#e6e6e6" stroke="#c6c6c6"/>
<path d="M440,742.500h6M440,744.500h6M440,746.500h6M440,748.500h6" stroke="#d0d0d0" stroke-width=".8"/><path d="M436.500,737l3,3M439.500,736v4M436,740h4M441.500,737.500l-2,2" stroke="#cfcfcf" stroke-width=".9"/></svg>
<svg style="left:459px;top:735px" width="16" height="16" viewBox="459 735 16 16"><path d="M461.500,735.500h11v6h-7l-3,-3z M461.500,750.500h11v-6h-7l-3,3z" fill="#e6e6e6" stroke="#c8c8c8" stroke-width="1" transform="translate(0,0)"/><path d="M466,738h5M466,740h5M466,746h5M466,748h5" stroke="#d4d4d4" stroke-width=".8"/><path d="M461.500,739l4,4l-4,4" fill="#f8f8f8" stroke="#c8c8c8"/></svg>
<svg style="left:481px;top:735px" width="17" height="16" viewBox="481 735 17 16"><path d="M482.500,738q0,-1.500 1.500,-1.500h4l1.500,1.800h6q1.200,0 1.200,1.200v9.500q0,1 -1,1h-12.200q-1,0 -1,-1z" fill="#dcdcdc" stroke="#cdcdcd"/><path d="M489.500,741.300l4.200,4.200h-2.700v3.200h-3v-3.200h-2.700z" fill="#e6e6e6" stroke="#bcbcbc" stroke-width=".9"/></svg>
<svg style="left:511px;top:735px" width="16" height="16" viewBox="511 735 16 16"><path d="M513.200,737.200L525.300,749.300" stroke="#b9b9b9" stroke-width="2.300" stroke-linecap="round"/><path d="M524.800,738L512.800,749.200" stroke="#bdbdbd" stroke-width="2.700" stroke-linecap="round"/></svg>
<svg style="left:539px;top:735px" width="18" height="16" viewBox="539 735 18 16"><path d="M540.500,742L548.500,735.600V739H552.500Q555.500,739 555.500,742V747.500Q555.500,750.500 552.500,750.500H549.500Q546.800,750.500 546.600,747.600z" fill="#c2c2c2" stroke="#b4b4b4" stroke-width=".7" stroke-linejoin="round"/><path d="M551.200,741.600v4.200M551.200,747.300v1.700" stroke="#f1f1f1" stroke-width="1.800"/></svg>
<svg style="left:562px;top:735px" width="18" height="16" viewBox="562 735 18 16"><path d="M579,742L571,735.600V739H567Q564,739 564,742V747.500Q564,750.500 567,750.500H570Q572.700,750.500 572.900,747.600z" fill="#c2c2c2" stroke="#b4b4b4" stroke-width=".7" stroke-linejoin="round"/><path d="M568.300,741.600v4.200M568.300,747.300v1.700" stroke="#f1f1f1" stroke-width="1.800"/></svg>
<svg style="left:590px;top:735px" width="18" height="16" viewBox="590 735 18 16"><defs><linearGradient id="im" x1="0" y1="0" x2="1" y2=".6"><stop offset="0" stop-color="#2a80e0"/><stop offset=".5" stop-color="#7db8f0"/><stop offset="1" stop-color="#eef6fd"/></linearGradient>
<linearGradient id="iw" x1="0" y1="0" x2="0" y2="1"><stop offset="0" stop-color="#5aa8ea"/><stop offset=".4" stop-color="#1f6fd0"/><stop offset="1" stop-color="#0d4aa0"/></linearGradient></defs>
<rect x="591.500" y="736.500" width="15" height="13" fill="#fff" stroke="#333a44" stroke-width="1"/><rect x="593" y="738" width="12" height="10" fill="url(#im)"/>
<ellipse cx="601.500" cy="740.500" rx="3.200" ry="1.600" fill="#fff" opacity=".85"/>
<path d="M593,741.300q3,-.5 6,2t6,2.200v2.500h-12z" fill="#2f7f46"/><path d="M593,745.300h12v2.700h-12z" fill="url(#iw)"/></svg>
<svg style="left:609px;top:742px" width="5" height="3" viewBox="609 742 5 3"><path d="M609,742h5l-2.5,2.8z" fill="#000"/></svg>
<svg style="left:215px;top:787px" width="16" height="15" viewBox="215 787 16 15"><path d="M217.200,789.300L228.600,800.200" stroke="#c80c28" stroke-width="2.600" stroke-linecap="round"/><path d="M228.200,789.300L217,800.300" stroke="#cf1a34" stroke-width="2.100" stroke-linecap="round"/><path d="M217.500,789L228.800,799.800" stroke="#ee7f8e" stroke-width=".7"/></svg>
<svg style="left:285px;top:787px" width="18" height="14" viewBox="285 787 18 14"><defs><linearGradient id="em" x1="0" y1="0" x2="0" y2="1"><stop offset="0" stop-color="#fafafa"/><stop offset="1" stop-color="#dedede"/></linearGradient></defs><rect x="286.500" y="788.500" width="15" height="11" fill="url(#em)" stroke="#858585"/><path d="M288,791h4M289,796.500h6" stroke="#9a9a9a" stroke-width="1"/><rect x="294.500" y="789.800" width="5.500" height="4" fill="#f6a0a0" stroke="#e24a4a" stroke-width=".8"/></svg>
<svg style="left:346px;top:787px" width="18" height="15" viewBox="346 787 18 15"><path d="M352.500,788h5q5.300,0 5.300,5v.3q0,4.700 -4.500,5l1.200,3l-4.500,-3h-2.500q-5.300,0 -5.300,-5v-.3q0,-5 5.300,-5z" fill="#fdfdfe" stroke="#2c3e62" stroke-width="1.100" stroke-linejoin="round"/><path d="M350.800,791.700h8.400M350.800,794.300h8.400" stroke="#1f2a44" stroke-width="1.200"/></svg>
<svg style="left:1255px;top:270px" width="9" height="6" viewBox="1255 270 9 6"><path d="M1255.700,270.800h7.400l-3.700,4.400z" fill="#000"/></svg>
<div style="position:absolute;left:0;top:0;width:1280px;height:21px;overflow:hidden"><span class="t" style="left:20px;top:3.00px;font:normal 12px/16px 'Liberation Sans',sans-serif;color:#000;transform:translateX(0.59px) scaleX(0.9490);text-shadow:0 0 6px #fff,0 0 8px #fff,0 0 10px #fff,0 0 4px #fff;">RWSSC - LFTwain - Laserfiche Scanning</span></div>
<span class="t" style="left:14px;top:26.00px;font:normal 12px/16px 'Liberation Sans',sans-serif;color:#000;transform:translateX(0.86px) scaleX(0.9509);">File</span>
<span class="t" style="left:51px;top:26.00px;font:normal 12px/16px 'Liberation Sans',sans-serif;color:#000;transform:translateX(0.44px) scaleX(1.0214);">Edit</span>
<span class="t" style="left:90px;top:26.00px;font:normal 12px/16px 'Liberation Sans',sans-serif;color:#000;transform:translateX(0.89px) scaleX(0.9625);">View</span>
<span class="t" style="left:134px;top:26.00px;font:normal 12px/16px 'Liberation Sans',sans-serif;color:#000;transform:translateX(0.89px) scaleX(1.0591);">Action</span>
<span class="t" style="left:188px;top:26.00px;font:normal 12px/16px 'Liberation Sans',sans-serif;color:#000;transform:translateX(0.60px) scaleX(1.0154);">Help</span>
<span class="t" style="left:47px;top:57.00px;font:normal 12px/16px 'Liberation Sans',sans-serif;color:#000;transform:translateX(0.92px) scaleX(0.9834);">Start Scanning</span>
<span class="t" style="left:289px;top:57.00px;font:normal 12px/16px 'Liberation Sans',sans-serif;color:#000;transform:translateX(0.81px) scaleX(1.0191);">Count:</span>
<span class="t" style="left:333px;top:57.00px;font:normal 12px/16px 'Liberation Sans',sans-serif;color:#000;transform:translateX(0.90px) scaleX(0.9400);">1</span>
<span class="t" style="left:98px;top:96.00px;font:normal 12px/16px 'Liberation Sans',sans-serif;color:#000;transform:translateX(0.82px) scaleX(0.9059);">Paper Size:</span>
<span class="t" style="left:290px;top:96.00px;font:normal 12px/16px 'Liberation Sans',sans-serif;color:#000;transform:translateX(0.51px) scaleX(0.9476);">Paper Source:</span>
<span class="t" style="left:498px;top:96.00px;font:normal 12px/16px 'Liberation Sans',sans-serif;color:#000;transform:translateX(0.66px) scaleX(1.0117);">Color:</span>
<span class="t" style="left:539px;top:97.00px;font:normal 12px/16px 'Liberation Sans',sans-serif;color:#000;transform:translateX(0.70px) scaleX(1.0172);">Black &amp; White</span>
<span class="t" style="left:3px;top:126.00px;font:normal 12px/16px 'Liberation Sans',sans-serif;color:#000;transform:translateX(0.56px) scaleX(0.9637);">Scanning Explorer</span>
<span class="t" style="left:22px;top:150.00px;font:bold 13px/16px 'Liberation Sans',sans-serif;color:#000;transform:translateX(0.51px) scaleX(1.0074);">Configuration</span>
<span class="t" style="left:26px;top:172.00px;font:normal 12.5px/16px 'Liberation Sans',sans-serif;color:#fff;transform:translateX(0.39px) scaleX(0.8309);">Default properties</span>
<span class="t" style="left:25px;top:188.00px;font:normal 12.5px/16px 'Liberation Sans',sans-serif;color:#000;transform:translateX(0.83px) scaleX(0.8345);">Image Processing</span>
<span class="t" style="left:44px;top:204.00px;font:normal 12.5px/16px 'Liberation Sans',sans-serif;color:#000;transform:translateX(0.63px) scaleX(0.8379);">OmniPage OCR</span>
<span class="t" style="left:22px;top:279.00px;font:bold 13px/16px 'Liberation Sans',sans-serif;color:#000;transform:translateX(0.74px) scaleX(0.9510);">Revision</span>
<span class="t" style="left:39px;top:302.00px;font:normal 12px/16px 'Liberation Sans',sans-serif;color:#000;transform:translateX(0.23px) scaleX(0.9898);">Scanned Documents</span>
<span class="t" style="left:260px;top:130.00px;font:normal 12px/16px 'Liberation Sans',sans-serif;color:#6d6d6d;transform:translateX(0.63px) scaleX(0.9621);">100%</span>
<span class="t" style="left:1033px;top:126.00px;font:normal 12px/16px 'Liberation Sans',sans-serif;color:#000;transform:translateX(0.82px) scaleX(0.9864);">Default Properties</span>
<span class="t" style="left:1035px;top:146.00px;font:normal 12.5px/16px 'Liberation Sans',sans-serif;color:#000;transform:translateX(0.92px) scaleX(0.8553);">Default document name:</span>
<span class="t" style="left:1034px;top:169.00px;font:normal 12.5px/16px 'Liberation Sans',sans-serif;color:#000;transform:translateX(0.89px) scaleX(0.8906);">Untitled</span>
<span class="t" style="left:1263px;top:168.50px;font:normal 11px/16px 'Liberation Sans',sans-serif;color:#000;transform:translateX(0.20px) scaleX(0.9500);">&gt;</span>
<span class="t" style="left:1034px;top:207.00px;font:normal 12px/16px 'Liberation Sans',sans-serif;color:#000;transform:translateX(0.48px) scaleX(0.9650);">Fields</span>
<span class="t" style="left:1081px;top:207.00px;font:normal 12px/16px 'Liberation Sans',sans-serif;color:#000;transform:translateX(0.60px) scaleX(1.0224);">Tags</span>
<span class="t" style="left:1123px;top:207.00px;font:normal 12px/16px 'Liberation Sans',sans-serif;color:#000;transform:translateX(0.60px) scaleX(0.9852);">Settings</span>
<span class="t" style="left:1041px;top:235.00px;font:bold 13px/16px 'Liberation Sans',sans-serif;color:#6a5acd;transform:translateX(0.92px) scaleX(0.9715);">Template</span>
<span class="t" style="left:1045px;top:264.50px;font:normal 12.5px/16px 'Liberation Sans',sans-serif;color:#000;transform:translateX(0.39px) scaleX(0.8435);">No template assigned</span>
<span class="t" style="left:334px;top:734.50px;font:normal 12px/16px 'Liberation Sans',sans-serif;color:#000;transform:translateX(0.04px) scaleX(0.9680);">of 0</span>
<span class="t" style="left:207px;top:764.00px;font:normal 12px/16px 'Liberation Sans',sans-serif;color:#000;transform:translateX(0.43px) scaleX(0.9669);">Error Log</span>
<span class="t" style="left:233px;top:786.00px;font:normal 12px/16px 'Liberation Sans',sans-serif;color:#000;transform:translateX(0.87px) scaleX(0.9925);">Clear All</span>
<span class="t" style="left:304px;top:786.00px;font:normal 12px/16px 'Liberation Sans',sans-serif;color:#000;transform:translateX(0.71px) scaleX(1.0089);">E-mail</span>
<span class="t" style="left:365px;top:786.00px;font:normal 12px/16px 'Liberation Sans',sans-serif;color:#000;transform:translateX(0.68px) scaleX(0.9773);">Details</span>
<span class="t" style="left:211px;top:813.00px;font:normal 12.5px/16px 'Liberation Sans',sans-serif;color:#000;transform:translateX(0.40px) scaleX(0.7862);">Error</span>
<span class="t" style="left:611px;top:813.00px;font:normal 12.5px/16px 'Liberation Sans',sans-serif;color:#000;transform:translateX(0.83px) scaleX(0.8229);">Timestamp</span>
<span class="t" style="left:832px;top:813.00px;font:normal 12.5px/16px 'Liberation Sans',sans-serif;color:#000;transform:translateX(0.52px) scaleX(0.8626);">Thread ID</span>
<span class="t" style="left:892px;top:813.00px;font:normal 12.5px/16px 'Liberation Sans',sans-serif;color:#000;transform:translateX(0.43px) scaleX(0.8249);">Assembly</span>
<span class="t" style="left:211px;top:834.00px;font:normal 12.5px/16px 'Liberation Sans',sans-serif;color:#fff;transform:translateX(0.81px) scaleX(0.8396);">Failed to create the 'BPOCRClient.BPProcessEx' process.</span>
<span class="t" style="left:611px;top:834.00px;font:normal 12.5px/16px 'Liberation Sans',sans-serif;color:#fff;transform:translateX(0.81px) scaleX(0.8942);">4/23/2014 1:08:02 PM</span>
<span class="t" style="left:834px;top:834.00px;font:normal 12.5px/16px 'Liberation Sans',sans-serif;color:#fff;transform:translateX(0.40px) scaleX(0.8200);">1</span>
<span class="t" style="left:892px;top:834.00px;font:normal 12.5px/16px 'Liberation Sans',sans-serif;color:#fff;transform:translateX(0.63px) scaleX(0.8635);">Interop....</span>
<span class="t" style="left:206px;top:896.00px;font:normal 12.5px/16px 'Liberation Sans',sans-serif;color:#000;transform:translateX(0.80px) scaleX(0.8416);">Failed to create the 'BPOCRClient.BPProcessEx' process.</span>
<span class="t" style="left:208px;top:943.00px;font:normal 12px/16px 'Liberation Sans',sans-serif;color:#6d6d80;transform:translateX(0.80px) scaleX(0.8665);">Thumbnails</span>
<span class="t" style="left:272px;top:943.00px;font:normal 12px/16px 'Liberation Sans',sans-serif;color:#000;transform:translateX(0.80px) scaleX(0.9031);">Error Log</span>
<span class="t" style="left:1032px;top:931.00px;font:normal 12.5px/16px 'Liberation Sans',sans-serif;color:#000;transform:translateX(0.84px) scaleX(0.8472);">More Options:</span>
<span class="t" style="left:1038px;top:946.00px;font:normal 12.5px/16px 'Liberation Sans',sans-serif;color:#0000ff;transform:translateX(0.59px) scaleX(0.8159);text-decoration:underline;">Clear Fields</span>
<span class="t" style="left:3px;top:966.00px;font:normal 12px/16px 'Liberation Sans',sans-serif;color:#000;transform:translateX(0.75px) scaleX(0.9390);">For Help, press F1</span>
</body></html>
